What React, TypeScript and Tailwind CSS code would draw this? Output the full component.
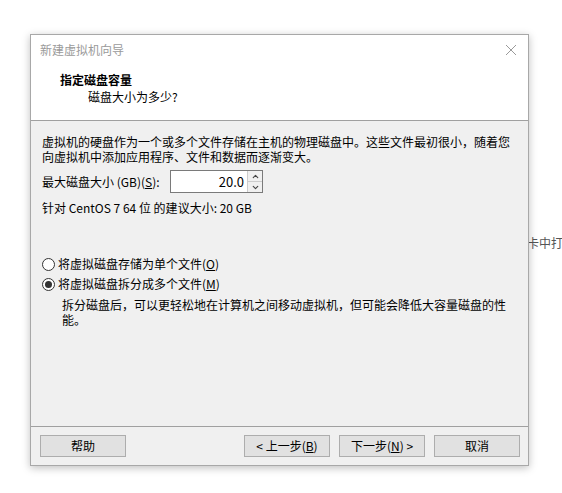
import { ChevronUp, ChevronDown } from 'lucide-react'

const font = { fontFamily: '"Noto Sans CJK SC", "Microsoft YaHei", sans-serif' }

function Radio({ checked, label, hotkey }: { checked: boolean; label: string; hotkey: string }) {
  return (
    <div className="flex items-center h-[20px]">
      <span className="w-[13px] h-[13px] rounded-full border border-[#333] bg-white flex items-center justify-center mr-[3px]">
        {checked && <span className="w-[7px] h-[7px] rounded-full bg-[#333]" />}
      </span>
      <span>
        {label}(<span className="underline">{hotkey}</span>)
      </span>
    </div>
  )
}

function Button({ children }: { children: React.ReactNode }) {
  return (
    <button className="w-[86px] h-[22px] bg-[#e1e1e1] border border-[#adadad] text-[12px] text-black flex items-center justify-center leading-none">
      {children}
    </button>
  )
}

export default function App() {
  return (
    <div className="w-[562px] h-[493px] bg-white relative overflow-hidden text-[12px] text-black" style={font}>
      <div className="absolute left-[527px] top-[234px] text-[12px] text-[#555] whitespace-nowrap">卡中打</div>

      <div className="absolute left-[30px] top-[34px] w-[499px] h-[432px] border border-[#a8a8a8] bg-[#f0f0f0] flex flex-col shadow-[0_2px_8px_rgba(0,0,0,0.25)]">
        {/* title bar */}
        <div className="h-[30px] bg-white flex items-center justify-between pl-[9px] pr-[8px] shrink-0">
          <span className="text-[#9a9a9a]">新建虚拟机向导</span>
          <svg width="12" height="12" viewBox="0 0 12 12" className="mr-[3px]">
            <path d="M1 1L11 11M11 1L1 11" stroke="#9a9a9a" strokeWidth="1" />
          </svg>
        </div>

        {/* header */}
        <div className="h-[56px] bg-white pl-[29px] pt-[6px] shrink-0 border-b border-[#a0a0a0]">
          <div className="font-bold leading-[17px]">指定磁盘容量</div>
          <div className="pl-[28px] leading-[17px]">磁盘大小为多少?</div>
        </div>

        {/* body */}
        <div className="flex-1 pl-[11px] pr-[10px] pt-[13px] border-b border-[#a0a0a0]">
          <p className="leading-[15px]">
            虚拟机的硬盘作为一个或多个文件存储在主机的物理磁盘中。这些文件最初很小，随着您
            <br />
            向虚拟机中添加应用程序、文件和数据而逐渐变大。
          </p>

          <div className="flex items-center mt-[6px] h-[23px]">
            <span className="w-[128px]">
              最大磁盘大小 (GB)(<span className="underline">S</span>):
            </span>
            <div className="flex h-[23px] border border-[#7a7a7a] bg-white">
              <div className="w-[76px] text-right pr-[3px] flex items-center justify-end text-[13px]">20.0</div>
              <div className="w-[15px] flex flex-col border-l border-[#ccc] bg-[#f0f0f0]">
                <div className="flex-1 flex items-center justify-center border-b border-[#ccc]">
                  <ChevronUp size={9} strokeWidth={3} color="#444" />
                </div>
                <div className="flex-1 flex items-center justify-center">
                  <ChevronDown size={9} strokeWidth={3} color="#444" />
                </div>
              </div>
            </div>
          </div>

          <div className="mt-[7px] leading-[15px]">针对 CentOS 7 64 位 的建议大小: 20 GB</div>

          <div className="mt-[39px]">
            <Radio checked={false} label="将虚拟磁盘存储为单个文件" hotkey="O" />
            <Radio checked={true} label="将虚拟磁盘拆分成多个文件" hotkey="M" />
            <p className="pl-[20px] pt-[3px] leading-[15px]">
              拆分磁盘后，可以更轻松地在计算机之间移动虚拟机，但可能会降低大容量磁盘的性
              <br />
              能。
            </p>
          </div>
        </div>

        {/* footer */}
        <div className="h-[38px] shrink-0 flex items-center pl-[9px] pr-[8px]">
          <Button>帮助</Button>
          <div className="flex-1" />
          <div className="flex gap-[9px]">
            <Button>
              &lt; 上一步(<span className="underline">B</span>)
            </Button>
            <Button>
              下一步(<span className="underline">N</span>) &gt;
            </Button>
            <Button>取消</Button>
          </div>
        </div>
      </div>
    </div>
  )
}
